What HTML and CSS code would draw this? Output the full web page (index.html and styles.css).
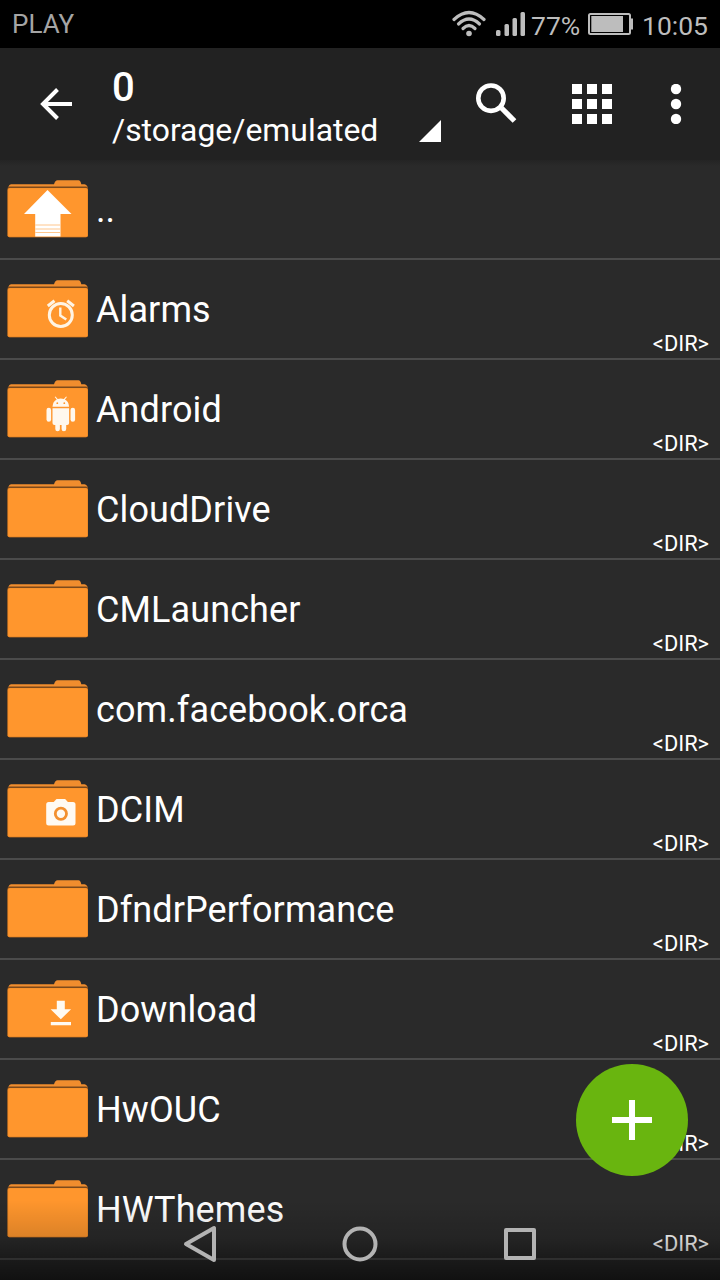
FILE: index.html
```html
<!DOCTYPE html>
<html lang="en">
<head>
    <meta charset="UTF-8">
    <meta name="viewport" content="width=device-width, initial-scale=1.0">
    <title>/storage/emulated/0</title>
    <link rel="stylesheet" href="styles.css">
</head>
<body>
    <!-- Shared folder shape -->
    <svg class="defs" width="0" height="0">
        <symbol id="folder" viewBox="0 0 96 98">
            <path fill="#f08d2e" d="M8.500 28v-1.200q.5-2.600 2.500-2.600h43q1.200-4 3.500-4h21q2 0 2.800 4h3.200q2 0 3 2.600V28z"/>
            <rect x="7.500" y="26.600" width="80.500" height="50.700" rx="2" fill="#7d4a1c"/>
            <rect x="7.500" y="28" width="80.500" height="49.200" rx="2" fill="#e58424"/>
            <rect x="8.200" y="28.300" width="79.200" height="48.200" rx="1.500" fill="#ff962d"/>
        </symbol>
    </svg>

    <div class="screen">
        <header class="status-bar">
            <span class="carrier">PLAY</span>
            <svg class="wifi" width="36" height="28" viewBox="0 0 36 28">
                <g fill="none" stroke="#bdbdbd" stroke-width="3.200" stroke-linecap="round">
                    <path d="M3 9.500Q18-4.500 33 9.500"/>
                    <path d="M7.500 14Q18 4 28.500 14"/>
                    <path d="M12 18.500Q18 12.500 24 18.500"/>
                </g>
                <circle cx="18" cy="23.500" r="2.800" fill="#bdbdbd"/>
            </svg>
            <svg class="signal" width="30" height="24" viewBox="0 0 30 24" fill="#bdbdbd">
                <rect x="0" y="18" width="4.500" height="6" rx="1.500"/>
                <rect x="8.500" y="12" width="4.500" height="12" rx="1.500"/>
                <rect x="16.500" y="6" width="4.500" height="18" rx="1.500"/>
                <rect x="24.500" y="0" width="4.500" height="24" rx="1.500"/>
            </svg>
            <span class="percent">77%</span>
            <svg class="battery" width="46" height="22" viewBox="0 0 46 22">
                <rect x="1" y="1" width="41" height="20" rx="1.500" fill="none" stroke="#bdbdbd" stroke-width="2"/>
                <rect x="3.300" y="3" width="31.700" height="16" fill="#bdbdbd"/>
                <rect x="43" y="5.500" width="2" height="11" fill="#bdbdbd"/>
            </svg>
            <span class="clock">10:05</span>
        </header>

        <div class="toolbar">
            <svg class="back" width="32" height="32" viewBox="0 0 32 32">
                <path d="M17.500 1.500 3 16l14.500 14.500M3 16h29" fill="none" stroke="#fff" stroke-width="4"/>
            </svg>
            <div class="location">
                <h1>0</h1>
                <p>/storage/emulated</p>
            </div>
            <div class="spinner-arrow"></div>
            <svg class="search" width="42" height="42" viewBox="0 0 42 42" fill="none" stroke="#fff">
                <circle cx="15" cy="15.200" r="12.700" stroke-width="4.600"/>
                <path d="M25.500 25 38.500 38" stroke-width="5.200"/>
            </svg>
            <svg class="grid" width="40" height="40" viewBox="0 0 40 40">
                <path fill="#fff" d="M0 0h10v10H0zM15 0h10v10H15zM30 0h10v10H30zM0 15h10v10H0zM15 15h10v10H15zM30 15h10v10H30zM0 30h10v10H0zM15 30h10v10H15zM30 30h10v10H30z"/>
            </svg>
            <svg class="more" width="12" height="40" viewBox="0 0 12 40" fill="#fff">
                <circle cx="6" cy="5" r="5.200"/>
                <circle cx="6" cy="20" r="5.200"/>
                <circle cx="6" cy="35" r="5.200"/>
            </svg>
        </div>

        <ul class="file-list">
            <li>
                <svg class="icon" viewBox="0 0 96 98">
                    <use href="#folder"/>
                    <path fill="#fff" d="M47.500 30 71.500 54H60.500v22.500H35.200V54H24z"/>
                    <path stroke="#ffc68d" stroke-width="1" d="M35.200 65h25.300M35.200 69h25.300M35.200 72.500h25.300"/>
                </svg>
                <span class="name">..</span>
            </li>
            <li>
                <svg class="icon" viewBox="0 0 96 98">
                    <use href="#folder"/>
                    <g fill="none" stroke="#fff4e4">
                        <circle cx="60.800" cy="55" r="11.500" stroke-width="3"/>
                        <path d="M60.300 47.500V55.500L66.300 59.500" stroke-width="2.400"/>
                        <path d="M47.800 46 54.500 40.700M67.200 40.700 73.900 46" stroke-width="3"/>
                    </g>
                </svg>
                <span class="name">Alarms</span>
                <span class="type">&lt;DIR&gt;</span>
            </li>
            <li>
                <svg class="icon" viewBox="0 0 96 98">
                    <use href="#folder"/>
                    <g fill="#fff8ee">
                        <path d="M52.500 46.800q.3-5.300 4.200-7.300l-2-2.500.8-.5 2.200 2.600q3-1 6.200 0l2.200-2.600.8.5-2 2.500q3.900 2 4.200 7.300z"/>
                        <path d="M52.500 48.300h16.600V63q0 2-2 2h-.9v4a2.300 2.300 0 0 1-4.600 0v-4h-1.700v4a2.300 2.300 0 0 1-4.600 0v-4h-.8q-2 0-2-2z"/>
                        <rect x="46.500" y="47.800" width="4.600" height="14" rx="2.300"/>
                        <rect x="70.500" y="47.800" width="4.600" height="14" rx="2.300"/>
                    </g>
                    <circle cx="57.300" cy="43.200" r=".9" fill="#ff962d"/>
                    <circle cx="64.300" cy="43.200" r=".9" fill="#ff962d"/>
                </svg>
                <span class="name">Android</span>
                <span class="type">&lt;DIR&gt;</span>
            </li>
            <li>
                <svg class="icon" viewBox="0 0 96 98"><use href="#folder"/></svg>
                <span class="name">CloudDrive</span>
                <span class="type">&lt;DIR&gt;</span>
            </li>
            <li>
                <svg class="icon" viewBox="0 0 96 98"><use href="#folder"/></svg>
                <span class="name">CMLauncher</span>
                <span class="type">&lt;DIR&gt;</span>
            </li>
            <li>
                <svg class="icon" viewBox="0 0 96 98"><use href="#folder"/></svg>
                <span class="name">com.facebook.orca</span>
                <span class="type">&lt;DIR&gt;</span>
            </li>
            <li>
                <svg class="icon" viewBox="0 0 96 98">
                    <use href="#folder"/>
                    <path fill="#fffaf2" d="M56.500 39h8.600l2.800 3H73q2.500 0 2.500 2.500V63q0 2.500-2.500 2.500H48.700q-2.500 0-2.500-2.500V44.500q0-2.500 2.500-2.500h5z"/>
                    <circle cx="60.900" cy="53.700" r="5.600" fill="none" stroke="#f3902f" stroke-width="2.800"/>
                </svg>
                <span class="name">DCIM</span>
                <span class="type">&lt;DIR&gt;</span>
            </li>
            <li>
                <svg class="icon" viewBox="0 0 96 98"><use href="#folder"/></svg>
                <span class="name">DfndrPerformance</span>
                <span class="type">&lt;DIR&gt;</span>
            </li>
            <li>
                <svg class="icon" viewBox="0 0 96 98">
                    <use href="#folder"/>
                    <path fill="#fffaf2" d="M56.800 40.700h8v8.600h6.300l-10.300 10-10.200-10h6.200zM50.800 62H71v3.300H50.800z"/>
                </svg>
                <span class="name">Download</span>
                <span class="type">&lt;DIR&gt;</span>
            </li>
            <li>
                <svg class="icon" viewBox="0 0 96 98"><use href="#folder"/></svg>
                <span class="name">HwOUC</span>
                <span class="type">&lt;DIR&gt;</span>
            </li>
            <li>
                <svg class="icon" viewBox="0 0 96 98"><use href="#folder"/></svg>
                <span class="name">HWThemes</span>
                <span class="type">&lt;DIR&gt;</span>
            </li>
        </ul>

        <button class="fab" aria-label="Add">
            <svg width="40" height="40" viewBox="0 0 40 40">
                <path d="M17 0h6v17h17v6H23v17h-6V23H0v-6h17z" fill="#fff"/>
            </svg>
        </button>

        <nav class="nav-bar">
            <svg width="40" height="40" viewBox="0 0 40 40"><path d="M34 4v32L6 20z"/></svg>
            <svg width="40" height="40" viewBox="0 0 40 40"><circle cx="20" cy="20" r="15.500"/></svg>
            <svg width="40" height="40" viewBox="0 0 40 40"><rect x="6" y="6" width="28" height="28"/></svg>
        </nav>
    </div>
</body>
</html>
```
FILE: styles.css
```css
* {
    box-sizing: border-box;
}

body {
    margin: 0;
    font-family: Roboto, "Liberation Sans", sans-serif;
    background-color: #2a2a2a;
    color: #fff;
}

svg {
    display: block;
    flex-shrink: 0;
}

.defs {
    position: absolute;
}

.screen {
    position: relative;
    width: 720px;
    height: 1280px;
    overflow: hidden;
}

/* Status bar */
.status-bar {
    display: flex;
    align-items: center;
    height: 48px;
    padding: 0 12px;
    background: #000;
    color: #bdbdbd;
    font-size: 26.500px;
}

.carrier {
    color: #a5a5a5;
    font-size: 26px;
    margin-right: auto;
}

.wifi {
    margin-right: 9px;
}

.signal {
    margin-right: 5px;
}

.percent {
    width: 52px;
    margin-right: 5px;
    padding-top: 2px;
}

.battery {
    margin-right: 8px;
}

.clock {
    width: 66px;
    padding-top: 2px;
}

/* Toolbar */
.toolbar {
    display: flex;
    align-items: center;
    height: 112px;
    padding: 0 38px 0 40px;
    background: #222;
}

.location {
    width: 307px;
    margin-left: 40px;
    padding-top: 6px;
}

.location h1 {
    margin: 0;
    font-size: 40px;
    font-weight: 500;
    line-height: 46px;
}

.location p {
    margin: 0;
    font-size: 31.900px;
    line-height: 38px;
}

.spinner-arrow {
    width: 22px;
    height: 22px;
    margin: 54px 35px 0 0;
    background: #fff;
    clip-path: polygon(100% 0, 100% 100%, 0 100%);
}

.grid {
    margin-left: 54px;
}

.more {
    margin-left: 58px;
}

/* File list */
.file-list {
    list-style: none;
    margin: 0;
    padding: 0;
    background: linear-gradient(#242424, #2a2a2a 6px);
}

.file-list li {
    display: flex;
    align-items: center;
    height: 100px;
    padding-right: 11px;
    border-bottom: 2px solid #4b4b4b;
}

.icon {
    width: 96px;
    height: 98px;
}

.name {
    flex: 1;
    padding-top: 2px;
    font-size: 36px;
    letter-spacing: .1px;
}

.type {
    align-self: flex-end;
    font-size: 21.800px;
    line-height: 28px;
}

/* Floating add button */
.fab {
    position: absolute;
    right: 32px;
    bottom: 104px;
    display: flex;
    align-items: center;
    justify-content: center;
    width: 112px;
    height: 112px;
    padding: 0;
    border: none;
    border-radius: 50%;
    background: #69b50f;
}

/* Navigation keys over the list */
.nav-bar {
    position: absolute;
    left: 0;
    right: 0;
    bottom: 0;
    display: flex;
    justify-content: center;
    gap: 120px;
    height: 80px;
    padding-top: 24px;
    background: linear-gradient(rgba(0, 0, 0, 0), rgba(0, 0, 0, .14) 38px, rgba(0, 0, 0, .36) 57px, rgba(0, 0, 0, .6));
}

.nav-bar svg {
    fill: none;
    stroke: #b3b3b3;
    stroke-width: 4;
    stroke-linejoin: round;
}
```
